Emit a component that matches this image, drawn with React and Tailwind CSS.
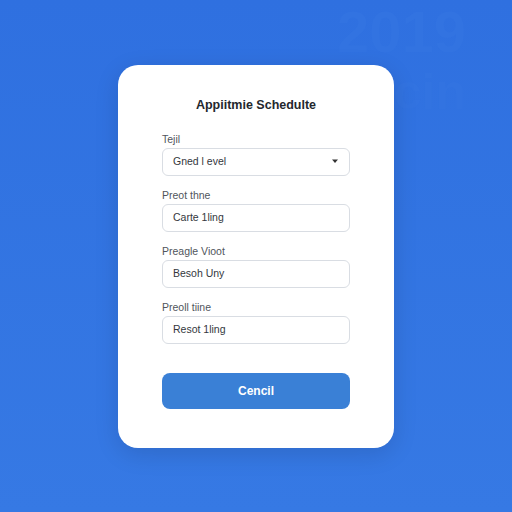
const fields = [
  { label: "Preot thne", value: "Carte 1ling" },
  { label: "Preagle Vioot", value: "Besoh Uny" },
  { label: "Preoll tiine", value: "Resot 1ling" },
];

export default function App() {
  return (
    <div
      className="relative h-[512px] w-[512px] overflow-hidden bg-gradient-to-b from-[#2f70e0] to-[#3679e4] flex items-center justify-center"
      style={{ fontFamily: '"Liberation Sans", Arial, sans-serif' }}
    >
      <div className="absolute right-[46px] top-0 text-right font-bold text-[#3273e1] select-none">
        <div className="text-[58px] leading-[64px]">2019</div>
        <div className="text-[50px] leading-[56px]">cin</div>
      </div>

      <div className="relative w-[276px] rounded-[20px] bg-white px-[44px] pt-[30px] pb-[39px] shadow-[0_6px_24px_rgba(0,0,0,0.12)]">
        <h1 className="h-5 text-center text-[12.5px] font-bold leading-5 text-[#23272d]">
          Appiitmie Schedulte
        </h1>

        <div className="mt-[17px] flex flex-col gap-3">
          <div className="flex flex-col gap-[2px]">
            <span className="h-[14px] text-[10.5px] leading-[14px] text-[#50555c]">Tejil</span>
            <div className="flex h-[28px] items-center justify-between rounded-md border border-[#d9dde3] px-[10px]">
              <span className="text-[10.5px] text-[#33373d]">Gned l evel</span>
              <svg width="8" height="5" viewBox="0 0 8 5">
                <path d="M1 0.5h6L4 4z" fill="#333" />
              </svg>
            </div>
          </div>
          {fields.map((f) => (
            <div key={f.label} className="flex flex-col gap-[2px]">
              <span className="h-[14px] text-[10.5px] leading-[14px] text-[#50555c]">{f.label}</span>
              <div className="flex h-[28px] items-center rounded-md border border-[#d9dde3] px-[10px]">
                <span className="text-[10.5px] text-[#33373d]">{f.value}</span>
              </div>
            </div>
          ))}
        </div>

        <button className="mt-[29px] flex h-[36px] w-full items-center justify-center rounded-lg bg-[#3a80d6] text-[12px] font-semibold text-white">
          Cencil
        </button>
      </div>
    </div>
  );
}
